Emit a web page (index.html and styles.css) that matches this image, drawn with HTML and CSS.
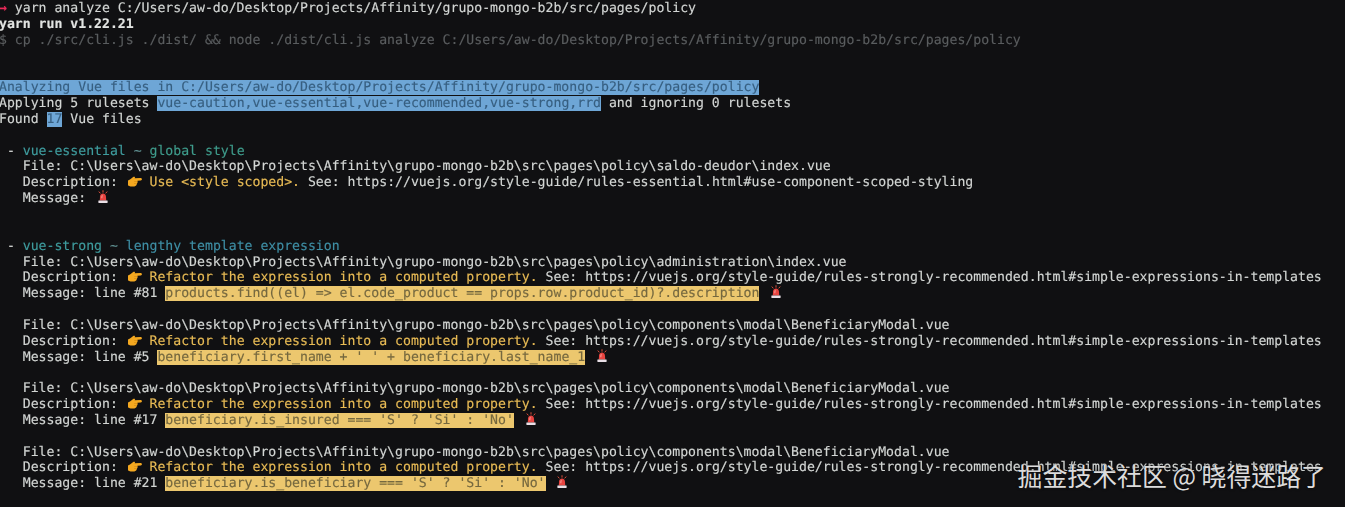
FILE: index.html
```html
<!DOCTYPE html>
<html lang="en">
<head>
<meta charset="utf-8">
<title>Terminal</title>
<link rel="stylesheet" href="styles.css">
</head>
<body>
<svg class="defs" width="0" height="0" aria-hidden="true">
  <symbol id="hand" viewBox="0 0 14 11">
    <path fill="#f4a820" d="M0 4.6 C1.4 3.8 2.6 3.2 3.6 2.2 C4.6 1.2 5.8 .4 6.6 .8 C7.2 1.2 7 1.8 6.6 2.2 L12.6 2 C14.2 2 14.4 4.2 12.8 4.4 L9.4 4.8 C9.8 6 9.6 7 9 7.6 C8.8 9 7.8 10.4 6.4 10.4 L3.6 10.4 C2.2 10.4 1.2 9.8 0 9.4 Z"/>
    <path fill="#c9820f" d="M6.2 5.2 L9 5 L9 5.6 L6.2 5.8 Z M6 7.4 L8.6 7.2 L8.6 7.8 L6 8 Z"/>
  </symbol>
  <symbol id="siren" viewBox="0 0 14 16">
    <path fill="#e8433f" d="M3.2 12 L3.6 7 C3.8 5 5.3 4 7 4 C8.7 4 10.2 5 10.4 7 L10.8 12 Z"/>
    <path fill="#f7a5a0" d="M5.2 7.5 C5.3 6.3 5.8 5.6 6.5 5.4 L6.2 9.5 L5.1 9.5 Z"/>
    <rect x="1.6" y="12" width="10.8" height="3" rx=".5" fill="#e9dfe6"/>
    <path stroke="#e8533f" stroke-width="1.1" stroke-linecap="round" d="M7 .6 V2.4 M2.4 2 L3.6 3.4 M11.6 2 L10.4 3.4"/>
  </symbol>
</svg>

<main class="terminal">
<div class="line"><span class="prompt">→</span> yarn analyze C:/Users/aw-do/Desktop/Projects/Affinity/grupo-mongo-b2b/src/pages/policy</div>
<div class="line strong">yarn run v1.22.21</div>
<div class="line dim">$ cp ./src/cli.js ./dist/ &amp;&amp; node ./dist/cli.js analyze C:/Users/aw-do/Desktop/Projects/Affinity/grupo-mongo-b2b/src/pages/policy</div>
<div class="line"> </div>
<div class="line"> </div>
<div class="line"><span class="hl-blue">Analyzing Vue files in C:/Users/aw-do/Desktop/Projects/Affinity/grupo-mongo-b2b/src/pages/policy</span></div>
<div class="line">Applying 5 rulesets <span class="hl-blue">vue-caution,vue-essential,vue-recommended,vue-strong,rrd</span> and ignoring 0 rulesets</div>
<div class="line">Found <span class="hl-blue">17</span> Vue files</div>
<div class="line"> </div>
<div class="line"> - <span class="rule">vue-essential</span> <span class="tilde">~</span> <span class="rule-name">global style</span></div>
<div class="line">   File: C:\Users\aw-do\Desktop\Projects\Affinity\grupo-mongo-b2b\src\pages\policy\saldo-deudor\index.vue</div>
<div class="line">   Description: <span class="emoji"><svg class="icon-hand"><use href="#hand"/></svg></span> <span class="warn">Use &lt;style scoped&gt;.</span> See: https://vuejs.org/style-guide/rules-essential.html#use-component-scoped-styling</div>
<div class="line">   Message: <span class="emoji"><svg class="icon-siren"><use href="#siren"/></svg></span></div>
<div class="line"> </div>
<div class="line"> </div>
<div class="line"> - <span class="rule">vue-strong</span> <span class="tilde">~</span> <span class="rule-name alt">lengthy template expression</span></div>
<div class="line">   File: C:\Users\aw-do\Desktop\Projects\Affinity\grupo-mongo-b2b\src\pages\policy\administration\index.vue</div>
<div class="line">   Description: <span class="emoji"><svg class="icon-hand"><use href="#hand"/></svg></span> <span class="warn">Refactor the expression into a computed property.</span> See: https://vuejs.org/style-guide/rules-strongly-recommended.html#simple-expressions-in-templates</div>
<div class="line">   Message: line #81 <span class="hl-yellow">products.find((el) =&gt; el.code_product == props.row.product_id)?.description</span> <span class="emoji"><svg class="icon-siren"><use href="#siren"/></svg></span></div>
<div class="line"> </div>
<div class="line">   File: C:\Users\aw-do\Desktop\Projects\Affinity\grupo-mongo-b2b\src\pages\policy\components\modal\BeneficiaryModal.vue</div>
<div class="line">   Description: <span class="emoji"><svg class="icon-hand"><use href="#hand"/></svg></span> <span class="warn">Refactor the expression into a computed property.</span> See: https://vuejs.org/style-guide/rules-strongly-recommended.html#simple-expressions-in-templates</div>
<div class="line">   Message: line #5 <span class="hl-yellow">beneficiary.first_name + ' ' + beneficiary.last_name_1</span> <span class="emoji"><svg class="icon-siren"><use href="#siren"/></svg></span></div>
<div class="line"> </div>
<div class="line">   File: C:\Users\aw-do\Desktop\Projects\Affinity\grupo-mongo-b2b\src\pages\policy\components\modal\BeneficiaryModal.vue</div>
<div class="line">   Description: <span class="emoji"><svg class="icon-hand"><use href="#hand"/></svg></span> <span class="warn">Refactor the expression into a computed property.</span> See: https://vuejs.org/style-guide/rules-strongly-recommended.html#simple-expressions-in-templates</div>
<div class="line">   Message: line #17 <span class="hl-yellow">beneficiary.is_insured === 'S' ? 'Si' : 'No'</span> <span class="emoji"><svg class="icon-siren"><use href="#siren"/></svg></span></div>
<div class="line"> </div>
<div class="line">   File: C:\Users\aw-do\Desktop\Projects\Affinity\grupo-mongo-b2b\src\pages\policy\components\modal\BeneficiaryModal.vue</div>
<div class="line">   Description: <span class="emoji"><svg class="icon-hand"><use href="#hand"/></svg></span> <span class="warn">Refactor the expression into a computed property.</span> See: https://vuejs.org/style-guide/rules-strongly-recommended.html#simple-expressions-in-templates</div>
<div class="line">   Message: line #21 <span class="hl-yellow">beneficiary.is_beneficiary === 'S' ? 'Si' : 'No'</span> <span class="emoji"><svg class="icon-siren"><use href="#siren"/></svg></span></div>
</main>
<div class="watermark">掘金技术社区 @ 晓得迷路了</div>
</body>
</html>
```
FILE: styles.css
```css
html, body {
  margin: 0;
  padding: 0;
  height: 507px;
  overflow: hidden;
  background: #101012;
}
.defs { position: absolute; }
.terminal {
  font-family: "DejaVu Sans Mono", monospace;
  font-size: 13.17px;
  line-height: 15.85px;
  color: #d3d6d4;
  margin-left: -1px;
  padding-top: 1px;
  filter: blur(0.4px);
  -webkit-text-stroke: 0.15px;
  text-rendering: geometricPrecision;
}
.line { white-space: pre; height: 15.85px; }
.prompt { color: #ea2a5a; font-weight: bold; }
.strong { font-weight: bold; color: #e2e4e2; }
.dim { color: #5a5d5f; }
.hl-blue { background: #6ea6d6; color: #375f80; }
.hl-yellow { background: #ecc76e; color: #75683f; }
.rule { color: #3f9c9e; }
.tilde { color: #5f8f90; }
.rule-name { color: #3f9c8c; }
.rule-name.alt { color: #3f8fa5; }
.warn { color: #e8bb55; }
.emoji {
  display: inline-block;
  width: 15.85px;
  height: 13px;
  vertical-align: -2px;
}
.emoji svg { display: block; }
.icon-hand { width: 14px; height: 11px; margin-left: 2px; margin-top: 1px; }
.icon-siren { width: 12px; height: 14px; margin-left: 3px; margin-top: -1px; overflow: visible; }
.watermark {
  position: absolute;
  right: 19px;
  top: 459px;
  font-family: "Noto Sans CJK SC", sans-serif;
  font-size: 24.9px;
  line-height: 32px;
  white-space: nowrap;
  color: #dcdcdc;
  text-shadow: 0 0 3px rgba(16,16,18,.8);
}
```
